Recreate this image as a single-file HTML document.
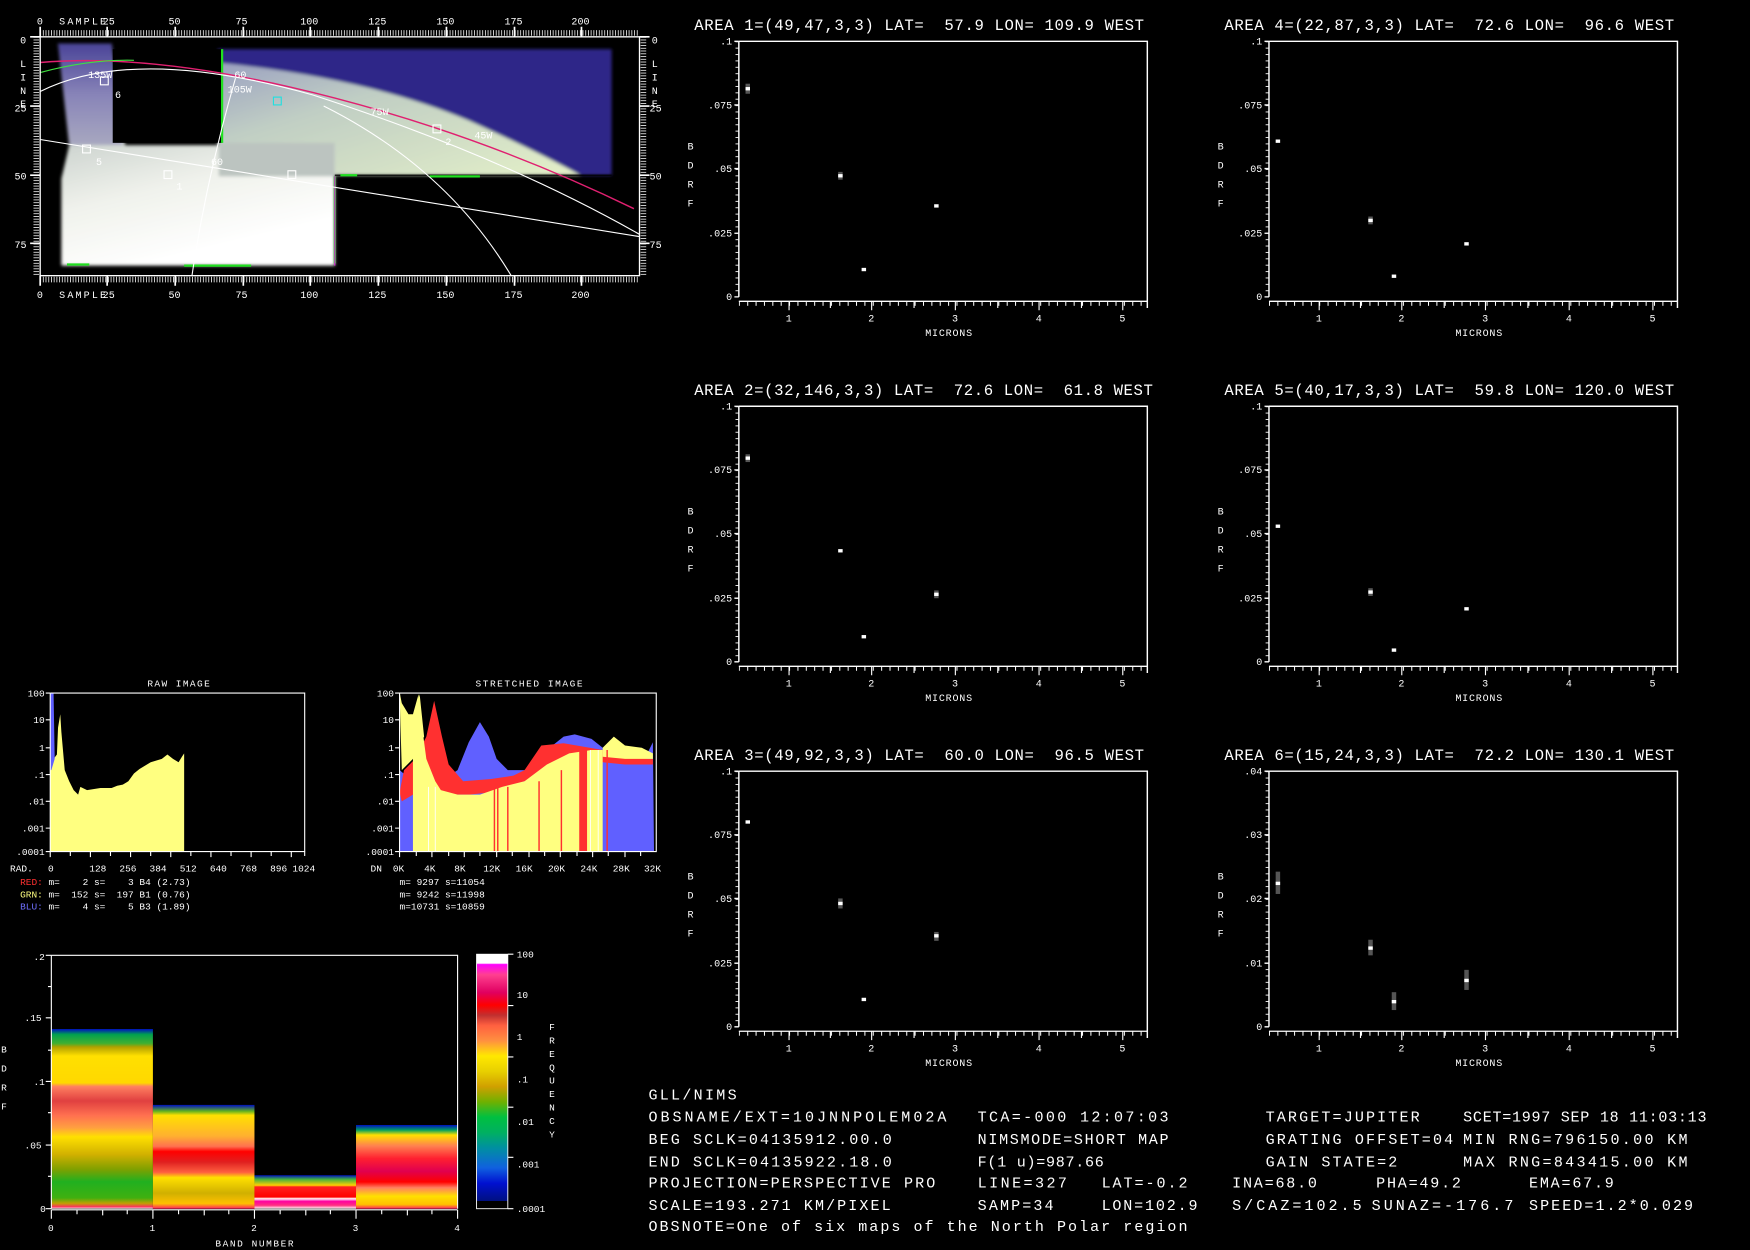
<!DOCTYPE html>
<html><head><meta charset="utf-8"><style>
html,body{margin:0;padding:0;background:#000;width:1750px;height:1250px;overflow:hidden}
svg{display:block}
text{font-family:"Liberation Mono","DejaVu Sans Mono",monospace;fill:#fff;white-space:pre}
</style></head><body>
<svg width="1750" height="1250" viewBox="0 0 1568 1120" xmlns="http://www.w3.org/2000/svg" xml:space="preserve">
<defs>
<pattern id="tx" x="36" y="0" width="2.43" height="10" patternUnits="userSpaceOnUse"><rect x="0" y="0" width="0.7" height="10" fill="#fff"/></pattern>
<pattern id="ty" x="0" y="33" width="10" height="2.47" patternUnits="userSpaceOnUse"><rect x="0" y="0" width="10" height="0.7" fill="#fff"/></pattern>
<pattern id="mx" x="632" y="0" width="7.5" height="10" patternUnits="userSpaceOnUse"><rect x="0" y="0" width="0.9" height="10" fill="#fff"/></pattern>
<pattern id="my" x="0" y="37" width="10" height="5.72" patternUnits="userSpaceOnUse"><rect x="0" y="0" width="10" height="0.8" fill="#fff"/></pattern>
<linearGradient id="lower" x1="0" y1="0" x2="0.3" y2="1">
<stop offset="0" stop-color="#9a9cc0"/><stop offset="0.35" stop-color="#c4ccc8"/><stop offset="0.7" stop-color="#f0f2ec"/><stop offset="1" stop-color="#fff"/></linearGradient>
<linearGradient id="strip" x1="0" y1="0" x2="0" y2="1">
<stop offset="0" stop-color="#4a4498"/><stop offset="0.5" stop-color="#8884b8"/><stop offset="1" stop-color="#a8a8c0"/></linearGradient>
<linearGradient id="limb" x1="0" y1="0" x2="1" y2="1">
<stop offset="0" stop-color="#9aa0c0"/><stop offset="0.35" stop-color="#c0cec4"/><stop offset="1" stop-color="#e4f0c8"/></linearGradient>
<linearGradient id="cbar" x1="0" y1="1" x2="0" y2="0">
<stop offset="0" stop-color="#000"/><stop offset="0.03" stop-color="#000"/><stop offset="0.03" stop-color="#001080"/><stop offset="0.1" stop-color="#0010d0"/><stop offset="0.16" stop-color="#1060e0"/><stop offset="0.24" stop-color="#0090a0"/><stop offset="0.3" stop-color="#00b060"/><stop offset="0.36" stop-color="#00c040"/><stop offset="0.42" stop-color="#70b000"/><stop offset="0.48" stop-color="#d0a000"/><stop offset="0.54" stop-color="#e8d000"/><stop offset="0.6" stop-color="#ffe800"/><stop offset="0.66" stop-color="#ff9040"/><stop offset="0.72" stop-color="#ff6040"/><stop offset="0.76" stop-color="#c03030"/><stop offset="0.8" stop-color="#ff0000"/><stop offset="0.85" stop-color="#e00060"/><stop offset="0.92" stop-color="#ff4090"/><stop offset="0.96" stop-color="#ff00ff"/><stop offset="0.965" stop-color="#fff"/><stop offset="1" stop-color="#fff"/></linearGradient>
<linearGradient id="b0" x1="0" y1="0" x2="0" y2="1">
<stop offset="0" stop-color="#0010c0"/><stop offset="0.03" stop-color="#00a050"/><stop offset="0.08" stop-color="#40b030"/><stop offset="0.1" stop-color="#b0a000"/><stop offset="0.15" stop-color="#ffe000"/><stop offset="0.3" stop-color="#ffd800"/><stop offset="0.32" stop-color="#ff8060"/><stop offset="0.4" stop-color="#e04040"/><stop offset="0.48" stop-color="#ff7050"/><stop offset="0.55" stop-color="#ffa040"/><stop offset="0.6" stop-color="#ffe000"/><stop offset="0.7" stop-color="#d0b000"/><stop offset="0.78" stop-color="#80a000"/><stop offset="0.85" stop-color="#20b020"/><stop offset="0.94" stop-color="#40b010"/><stop offset="0.97" stop-color="#c0a000"/><stop offset="0.99" stop-color="#ff3060"/><stop offset="1" stop-color="#fff"/></linearGradient>
<linearGradient id="b1" x1="0" y1="0" x2="0" y2="1">
<stop offset="0" stop-color="#0010c0"/><stop offset="0.06" stop-color="#60b020"/><stop offset="0.1" stop-color="#ffe000"/><stop offset="0.3" stop-color="#ffb030"/><stop offset="0.4" stop-color="#ff7050"/><stop offset="0.45" stop-color="#ff0000"/><stop offset="0.55" stop-color="#e02020"/><stop offset="0.65" stop-color="#ff6040"/><stop offset="0.7" stop-color="#ffe000"/><stop offset="0.85" stop-color="#d0b000"/><stop offset="0.95" stop-color="#ffc000"/><stop offset="1" stop-color="#ff2060"/></linearGradient>
<linearGradient id="b2" x1="0" y1="0" x2="0" y2="1">
<stop offset="0" stop-color="#0010c0"/><stop offset="0.12" stop-color="#40b040"/><stop offset="0.3" stop-color="#ffd000"/><stop offset="0.35" stop-color="#ff2020"/><stop offset="0.65" stop-color="#ff0000"/><stop offset="0.7" stop-color="#ffffff"/><stop offset="0.78" stop-color="#ff00a0"/><stop offset="0.9" stop-color="#ff3080"/><stop offset="1" stop-color="#fff"/></linearGradient>
<linearGradient id="b3" x1="0" y1="0" x2="0" y2="1">
<stop offset="0" stop-color="#0010c0"/><stop offset="0.06" stop-color="#00a060"/><stop offset="0.12" stop-color="#ffe000"/><stop offset="0.25" stop-color="#ff8050"/><stop offset="0.4" stop-color="#ff2030"/><stop offset="0.55" stop-color="#e00050"/><stop offset="0.68" stop-color="#ff0000"/><stop offset="0.75" stop-color="#ff8060"/><stop offset="0.85" stop-color="#ffe000"/><stop offset="0.95" stop-color="#ffc000"/><stop offset="1" stop-color="#ff2060"/></linearGradient>
<filter id="bl"><feGaussianBlur stdDeviation="1.5"/></filter>
<g id="pan">
<path d="M662 37 V266 M662 37 H1028 V276" stroke="#fff" stroke-width="1.3" fill="none"/>
<rect x="659" y="37" width="3" height="229" fill="url(#my)"/>
<path d="M662 37h-4M662 94h-4M662 151h-4M662 209h-4M662 266h-4" stroke="#fff" stroke-width="1.2"/>
<line x1="662" y1="270" x2="1028" y2="270" stroke="#fff" stroke-width="1.2"/>
<rect x="662" y="270" width="366" height="4" fill="url(#mx)"/>
<path d="M707 270v8M781 270v8M856 270v8M931 270v8M1006 270v8M744 270v6M819 270v6M894 270v6M969 270v6" stroke="#fff" stroke-width="1"/>
<g font-size="9"><text x="704" y="288">1</text><text x="778" y="288">2</text><text x="853" y="288">3</text><text x="928" y="288">4</text><text x="1003" y="288">5</text>
<text x="829" y="301" textLength="42">MICRONS</text>
<text x="616" y="134">B</text><text x="616" y="151">D</text><text x="616" y="168">R</text><text x="616" y="185">F</text></g>
</g>
<g id="yl" font-size="9" text-anchor="end"><text x="656" y="40">.1</text><text x="656" y="97">.075</text><text x="656" y="154">.05</text><text x="656" y="212">.025</text><text x="656" y="269">0</text></g>
</defs>

<!-- MAP -->
<g filter="url(#bl)">
<rect x="195" y="44" width="353" height="113" fill="#2e2888"/>
<path d="M195 56 Q 330 70 420 108 Q 480 135 520 157 L195 157Z" fill="url(#limb)"/>
<path d="M52 39 L100 39 L112 130 L300 130 L300 238 L55 238 L55 160 L62 130Z" fill="url(#lower)"/>
<path d="M52 39 L100 39 L110 130 L62 130Z" fill="url(#strip)"/>
<rect x="196" y="128" width="104" height="30" fill="#bcc4c0"/>
</g>
<rect x="101" y="44" width="98" height="84" fill="#000"/>
<path d="M199 44V128M300 158V236" stroke="#20e020" stroke-width="2"/>
<path d="M300 158V238" stroke="#e020e0" stroke-width="1"/>
<path d="M300 157H548" stroke="#000" stroke-width="1"/>
<path d="M305 157H320M385 158H430M60 237H80M165 238H225" stroke="#20e020" stroke-width="2"/>
<!-- curves -->
<path d="M36 56 Q 130 48 260 78 Q 420 115 568 187" stroke="#e02070" stroke-width="1.3" fill="none"/>
<path d="M36 65 Q 80 53 120 54" stroke="#40e040" stroke-width="1" fill="none"/>
<path d="M36 82 Q 120 40 280 85 Q 450 140 573 210" stroke="#fff" stroke-width="1" fill="none"/>
<path d="M36 125 L573 212" stroke="#fff" stroke-width="1" fill="none"/>
<path d="M211 70 Q 185 160 172 247" stroke="#fff" stroke-width="1" fill="none"/>
<path d="M290 95 Q 400 150 458 247" stroke="#fff" stroke-width="1" fill="none"/>
<g stroke="#fff" fill="none" stroke-width="1"><rect x="90" y="69" width="7" height="7"/><rect x="74" y="130" width="7" height="7"/><rect x="147" y="153" width="7" height="7"/><rect x="258" y="153" width="7" height="7"/><rect x="388" y="112" width="7" height="7"/></g>
<rect x="245" y="87" width="7" height="7" stroke="#20e0e0" fill="none"/>
<g font-size="9"><text x="79" y="70">135W</text><text x="103" y="88">6</text><text x="210" y="70">60</text><text x="204" y="83">105W</text><text x="332" y="103">75W</text><text x="425" y="124">45W</text><text x="399" y="130">2</text><text x="86" y="148">5</text><text x="158" y="170">1</text><text x="189" y="148">60</text></g>
<!-- map frame and rulers -->
<rect x="36" y="33" width="537" height="214" stroke="#fff" stroke-width="1.2" fill="none"/>
<rect x="36" y="27" width="537" height="5" fill="url(#tx)"/>
<rect x="36" y="248" width="537" height="5" fill="url(#tx)"/>
<rect x="30" y="33" width="5" height="214" fill="url(#ty)"/>
<rect x="574" y="33" width="5" height="214" fill="url(#ty)"/>
<g stroke="#fff" stroke-width="1.5"><path d="M36 24v9M96 24v9M157 24v9M218 24v9M278 24v9M339 24v9M400 24v9M461 24v9M521 24v9"/><path d="M36 247v9M96 247v9M157 247v9M218 247v9M278 247v9M339 247v9M400 247v9M461 247v9M521 247v9"/><path d="M27 33h9M27 95h9M27 157h9M27 218h9M573 33h9M573 95h9M573 157h9M573 218h9"/></g>
<g font-size="9"><text x="33" y="22">0</text><text x="53" y="22" textLength="42">SAMPLE</text><text x="92" y="22">25</text><text x="151" y="22">50</text><text x="211" y="22">75</text><text x="269" y="22">100</text><text x="330" y="22">125</text><text x="391" y="22">150</text><text x="452" y="22">175</text><text x="512" y="22">200</text>
<text x="33" y="267">0</text><text x="53" y="267" textLength="42">SAMPLE</text><text x="92" y="267">25</text><text x="151" y="267">50</text><text x="211" y="267">75</text><text x="269" y="267">100</text><text x="330" y="267">125</text><text x="391" y="267">150</text><text x="452" y="267">175</text><text x="512" y="267">200</text>
<text x="18" y="39">0</text><text x="18" y="60">L</text><text x="18" y="72">I</text><text x="18" y="84">N</text><text x="18" y="96">E</text><text x="13" y="100">25</text><text x="13" y="161">50</text><text x="13" y="222">75</text>
<text x="584" y="39">0</text><text x="584" y="60">L</text><text x="584" y="72">I</text><text x="584" y="84">N</text><text x="584" y="96">E</text><text x="582" y="100">25</text><text x="582" y="161">50</text><text x="582" y="222">75</text></g>

<!-- SPECTRUM PANELS -->
<use href="#pan"/><use href="#pan" x="475"/><use href="#pan" y="327"/><use href="#pan" x="475" y="327"/><use href="#pan" y="654"/><use href="#pan" x="475" y="654"/>
<use href="#yl"/><use href="#yl" x="475"/><use href="#yl" y="327"/><use href="#yl" x="475" y="327"/><use href="#yl" y="654"/>
<g font-size="9" text-anchor="end"><text x="1131" y="694">.04</text><text x="1131" y="751">.03</text><text x="1131" y="808">.02</text><text x="1131" y="866">.01</text><text x="1131" y="923">0</text></g>
<g font-size="14"><text x="622" y="27" textLength="403">AREA 1=(49,47,3,3) LAT=  57.9 LON= 109.9 WEST</text>
<text x="1097" y="27" textLength="403">AREA 4=(22,87,3,3) LAT=  72.6 LON=  96.6 WEST</text>
<text x="622" y="354" textLength="411">AREA 2=(32,146,3,3) LAT=  72.6 LON=  61.8 WEST</text>
<text x="1097" y="354" textLength="403">AREA 5=(40,17,3,3) LAT=  59.8 LON= 120.0 WEST</text>
<text x="622" y="681" textLength="403">AREA 3=(49,92,3,3) LAT=  60.0 LON=  96.5 WEST</text>
<text x="1097" y="681" textLength="403">AREA 6=(15,24,3,3) LAT=  72.2 LON= 130.1 WEST</text></g>
<g fill="#555"><rect x="668" y="75" width="4" height="9"/><rect x="751" y="154" width="4" height="7"/><rect x="668" y="407" width="4" height="7"/><rect x="751" y="805" width="4" height="9"/><rect x="837" y="835" width="4" height="8"/><rect x="1143" y="781" width="4" height="20"/><rect x="1226" y="842" width="4" height="14"/><rect x="1247" y="889" width="4" height="16"/><rect x="1312" y="869" width="4" height="18"/><rect x="1226" y="194" width="4" height="7"/><rect x="837" y="529" width="4" height="7"/><rect x="1226" y="527" width="4" height="7"/></g>
<g fill="#fff"><rect x="668" y="78" width="4" height="3"/><rect x="751" y="156" width="4" height="3"/><rect x="772" y="240" width="4" height="3"/><rect x="837" y="183" width="4" height="3"/>
<rect x="1143" y="125" width="4" height="3"/><rect x="1226" y="196" width="4" height="3"/><rect x="1247" y="246" width="4" height="3"/><rect x="1312" y="217" width="4" height="3"/>
<rect x="668" y="409" width="4" height="3"/><rect x="751" y="492" width="4" height="3"/><rect x="772" y="569" width="4" height="3"/><rect x="837" y="531" width="4" height="3"/>
<rect x="1143" y="470" width="4" height="3"/><rect x="1226" y="529" width="4" height="3"/><rect x="1247" y="581" width="4" height="3"/><rect x="1312" y="544" width="4" height="3"/>
<rect x="668" y="735" width="4" height="3"/><rect x="751" y="808" width="4" height="3"/><rect x="772" y="894" width="4" height="3"/><rect x="837" y="837" width="4" height="3"/>
<rect x="1143" y="790" width="4" height="3"/><rect x="1226" y="848" width="4" height="3"/><rect x="1247" y="896" width="4" height="3"/><rect x="1312" y="877" width="4" height="3"/></g>

<!-- RAW HISTOGRAM -->
<text x="132" y="615" font-size="8.5" textLength="56">RAW IMAGE</text>
<path d="M45 763 L45 650 L48 680 L51 676 L52 652 L54 640 L55 656 L58 690 L62 700 L66 708 L70 712 L72 705 L78 708 L90 706 L100 706 L105 704 L110 703 L115 700 L120 693 L125 689 L135 683 L145 680 L150 676 L155 680 L160 683 L163 678 L165 675 L165 763Z" fill="#ffff80"/>
<path d="M45 621 L48 621 L49 680 L46 690 L45 690Z" fill="#6060ff"/>
<path d="M45 621 V763 H273 V621 H45" stroke="#fff" fill="none" stroke-width="1"/>
<g stroke="#fff" stroke-width="1"><path d="M41 621h4M41 645h4M41 670h4M41 694h4M41 718h4M41 742h4M41 763h4"/><path d="M45 763v5M63 763v4M81 763v5M99 763v4M117 763v5M135 763v4M153 763v5M171 763v4M189 763v5M207 763v4M225 763v5M243 763v4M261 763v5M273 763v4"/></g>
<g font-size="8.5" text-anchor="end"><text x="40" y="624">100</text><text x="40" y="648">10</text><text x="40" y="673">1</text><text x="40" y="697">.1</text><text x="40" y="721">.01</text><text x="40" y="745">.001</text><text x="40" y="766">.0001</text></g>
<g font-size="8.5"><text x="9" y="781">RAD.</text><text x="43" y="781">0</text><text x="80" y="781">128</text><text x="107" y="781">256</text><text x="134" y="781">384</text><text x="161" y="781">512</text><text x="188" y="781">640</text><text x="215" y="781">768</text><text x="242" y="781">896</text><text x="262" y="781">1024</text>
<text x="18" y="793"><tspan fill="#ff3030">RED:</tspan> m=    2 s=    3 B4 (2.73)</text>
<text x="18" y="804"><tspan fill="#ffff80">GRN:</tspan> m=  152 s=  197 B1 (0.76)</text>
<text x="18" y="815"><tspan fill="#7070ff">BLU:</tspan> m=    4 s=    5 B3 (1.89)</text></g>

<!-- STRETCHED HISTOGRAM -->
<text x="426" y="615" font-size="8.5" textLength="96">STRETCHED IMAGE</text>
<path d="M358 763 L358 690 L370 700 L380 705 L395 700 L410 690 L420 665 L430 647 L438 660 L445 680 L455 690 L470 690 L490 672 L505 660 L515 658 L530 662 L540 670 L560 672 L580 675 L585 665 L586 763Z" fill="#6060ff"/>
<path d="M358 710 L362 690 L372 680 L382 660 L389 628 L396 660 L402 685 L415 700 L440 698 L460 695 L470 690 L485 668 L505 666 L540 672 L560 675 L580 680 L585 680 L585 685 L560 685 L540 683 L520 680 L500 690 L470 700 L440 710 L420 712 L400 712 L380 710 L370 712 L360 718Z" fill="#ff3030"/>
<path d="M370 763 L370 640 L375 622 L378 650 L382 680 L390 700 L395 708 L410 712 L430 712 L450 705 L470 700 L490 685 L510 675 L530 672 L540 672 L540 763Z" fill="#ffff80"/>
<path d="M540 670 L550 660 L560 668 L575 670 L585 675 L585 680 L560 680 L540 678Z" fill="#ffff80"/>
<path d="M358 620 L360 630 L366 640 L372 640 L376 622 L380 660 L370 680 L360 690Z" fill="#ffff80"/>
<g stroke="#ff3030" stroke-width="1.3"><path d="M443 705V763M446 705V763M455 705V763M483 700V763M503 690V763M544 672V763M523 672V763"/></g>
<rect x="519" y="672" width="7" height="91" fill="#ff3030"/>
<g stroke="#fff" stroke-width="0.8"><path d="M384 705V763M390 705V763M529 672V763M536 672V763"/></g>
<path d="M358 621 V763 H588 V621 H358" stroke="#fff" fill="none" stroke-width="1"/>
<g stroke="#fff" stroke-width="1"><path d="M354 621h4M354 645h4M354 670h4M354 694h4M354 718h4M354 742h4M354 763h4"/><path d="M358 763v5M373 763v4M387 763v5M402 763v4M416 763v5M430 763v4M445 763v5M459 763v4M474 763v5M488 763v4M502 763v5M517 763v4M531 763v5M545 763v4M560 763v5M574 763v4"/></g>
<g font-size="8.5" text-anchor="end"><text x="353" y="624">100</text><text x="353" y="648">10</text><text x="353" y="673">1</text><text x="353" y="697">.1</text><text x="353" y="721">.01</text><text x="353" y="745">.001</text><text x="353" y="766">.0001</text></g>
<g font-size="8.5"><text x="332" y="781">DN</text><text x="352" y="781">0K</text><text x="380" y="781">4K</text><text x="407" y="781">8K</text><text x="433" y="781">12K</text><text x="462" y="781">16K</text><text x="491" y="781">20K</text><text x="520" y="781">24K</text><text x="549" y="781">28K</text><text x="577" y="781">32K</text>
<text x="358" y="793">m= 9297 s=11054</text><text x="358" y="804">m= 9242 s=11998</text><text x="358" y="815">m=10731 s=10859</text></g>

<!-- BAND PLOT -->
<rect x="46" y="922" width="91" height="161" fill="url(#b0)"/>
<rect x="137" y="990" width="91" height="93" fill="url(#b1)"/>
<rect x="228" y="1053" width="91" height="30" fill="url(#b2)"/>
<rect x="319" y="1008" width="91" height="75" fill="url(#b3)"/>
<path d="M46 856 V1083 M46 856 H410 V1083" stroke="#fff" fill="none" stroke-width="1"/>
<line x1="46" y1="1084" x2="410" y2="1084" stroke="#fff" stroke-width="1"/>
<g stroke="#fff" stroke-width="1"><path d="M41 856h5M41 912h5M41 969h5M41 1026h5M41 1083h5M43 884h3M43 941h3M43 997h3M43 1054h3"/><path d="M46 1084v8M137 1084v8M228 1084v8M319 1084v8M410 1084v8M69 1084v4M92 1084v5M114 1084v4M160 1084v4M183 1084v5M205 1084v4M251 1084v4M274 1084v5M296 1084v4M342 1084v4M365 1084v5M387 1084v4"/></g>
<g font-size="8.5"><text x="30" y="860">.2</text><text x="22" y="915">.15</text><text x="30" y="972">.1</text><text x="22" y="1029">.05</text><text x="36" y="1086">0</text>
<text x="43" y="1103">0</text><text x="134" y="1103">1</text><text x="225" y="1103">2</text><text x="316" y="1103">3</text><text x="407" y="1103">4</text>
<text x="193" y="1117" textLength="70">BAND NUMBER</text>
<text x="1" y="943">B</text><text x="1" y="960">D</text><text x="1" y="977">R</text><text x="1" y="994">F</text></g>
<rect x="427" y="855" width="28" height="228" fill="url(#cbar)" stroke="#fff" stroke-width="0.8"/>
<g stroke="#fff" stroke-width="1"><path d="M455 855h5M455 901h5M455 947h5M455 992h5M455 1037h5M455 1083h5"/></g>
<g font-size="8.5"><text x="463" y="858">100</text><text x="463" y="894">10</text><text x="463" y="932">1</text><text x="463" y="970">.1</text><text x="463" y="1008">.01</text><text x="463" y="1046">.001</text><text x="463" y="1086">.0001</text>
<text x="492" y="923">F</text><text x="492" y="935">R</text><text x="492" y="947">E</text><text x="492" y="959">Q</text><text x="492" y="971">U</text><text x="492" y="983">E</text><text x="492" y="995">N</text><text x="492" y="1007">C</text><text x="492" y="1019">Y</text></g>

<!-- BOTTOM TEXT -->
<g font-size="13.5">
<text x="581" y="985" textLength="79">GLL/NIMS</text>
<text x="581" y="1005" textLength="267">OBSNAME/EXT=10JNNPOLEM02A</text>
<text x="876" y="1005" textLength="171">TCA=-000 12:07:03</text>
<text x="1134" y="1005" textLength="138">TARGET=JUPITER</text>
<text x="1311" y="1005" textLength="218">SCET=1997 SEP 18 11:03:13</text>
<text x="581" y="1025" textLength="218">BEG SCLK=04135912.00.0</text>
<text x="876" y="1025" textLength="171">NIMSMODE=SHORT MAP</text>
<text x="1134" y="1025" textLength="168">GRATING OFFSET=04</text>
<text x="1311" y="1025" textLength="201">MIN RNG=796150.00 KM</text>
<text x="581" y="1045" textLength="218">END SCLK=04135922.18.0</text>
<text x="876" y="1045" textLength="113">F(1 u)=987.66</text>
<text x="1134" y="1045" textLength="118">GAIN STATE=2</text>
<text x="1311" y="1045" textLength="201">MAX RNG=843415.00 KM</text>
<text x="581" y="1064" textLength="257">PROJECTION=PERSPECTIVE PRO</text>
<text x="876" y="1064" textLength="80">LINE=327</text>
<text x="987" y="1064" textLength="77">LAT=-0.2</text>
<text x="1104" y="1064" textLength="76">INA=68.0</text>
<text x="1233" y="1064" textLength="76">PHA=49.2</text>
<text x="1370" y="1064" textLength="76">EMA=67.9</text>
<text x="581" y="1084" textLength="217">SCALE=193.271 KM/PIXEL</text>
<text x="876" y="1084" textLength="68">SAMP=34</text>
<text x="987" y="1084" textLength="86">LON=102.9</text>
<text x="1104" y="1084" textLength="116">S/CAZ=102.5</text>
<text x="1229" y="1084" textLength="127">SUNAZ=-176.7</text>
<text x="1370" y="1084" textLength="147">SPEED=1.2*0.029</text>
<text x="581" y="1103" textLength="483">OBSNOTE=One of six maps of the North Polar region</text>
</g>
</svg>
</body></html>
